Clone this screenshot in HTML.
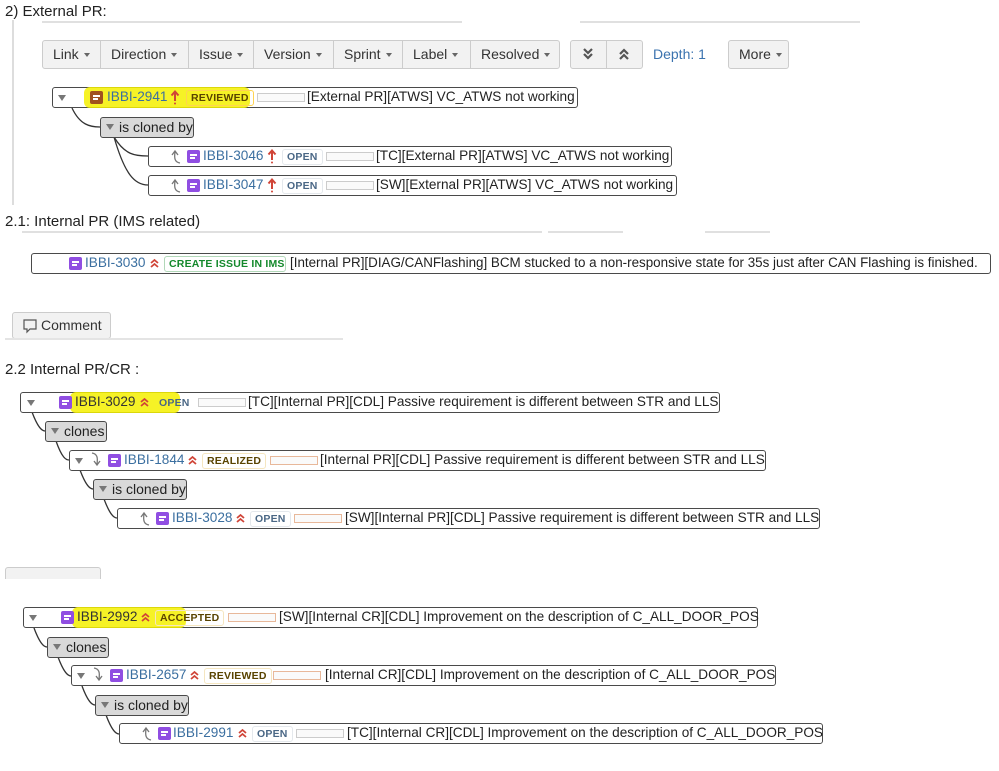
<!DOCTYPE html>
<html><head><meta charset="utf-8">
<style>
*{box-sizing:border-box;margin:0;padding:0}
body{width:999px;height:771px;background:#fff;position:relative;overflow:hidden;font-family:"Liberation Sans",Arial,sans-serif;color:#222}
.a{position:absolute;white-space:nowrap}
.h{font-size:15px;color:#222}
.box{position:absolute;border:1.5px solid #4a4a4a;border-radius:3px;background:#fff;height:21px}
.t{position:absolute;font-size:13.6px;line-height:18px;white-space:nowrap}
.key{color:#3b6fa0}
.st{position:absolute;font-size:10.5px;font-weight:bold;height:16px;line-height:15px;border:1px solid #e4e8ec;border-radius:3px;padding:0 4px;color:#4a6785;letter-spacing:.2px;white-space:nowrap}
.bar{position:absolute;height:9px;border:1px solid #ccc;background:#fafafa}
.bar.o{border-color:#e8b89a}
.ic{position:absolute;width:13px;height:13px;border-radius:2px;background:#904ee2}
.ic:before,.ic:after{content:"";position:absolute;left:3px;height:1.5px;background:#fff}
.ic:before{top:4px;width:7px}.ic:after{top:7px;width:5px}
.pill{position:absolute;height:21px;border:1.5px solid #4a4a4a;border-radius:3px;background:#d9d9d9;font-size:14px;line-height:18px;padding-left:18px;white-space:nowrap}
.pill:before,.tri:before{content:"";position:absolute;border-left:4px solid transparent;border-right:4px solid transparent;border-top:6px solid #777}
.pill:before{left:5px;top:6px}
.tri{position:absolute;width:8px;height:6px}.tri:before{left:0;top:0}
.hl{position:absolute;background:#f4f000;border-radius:6px;opacity:.85}
.btn{position:absolute;top:40px;height:29px;border:1px solid #ccc;background:#f2f2f2;font-size:14px;line-height:27px;color:#333;padding:0 0 0 10px;white-space:nowrap}
.car{display:inline-block;width:0;height:0;border-left:3.5px solid transparent;border-right:3.5px solid transparent;border-top:4px solid #666;vertical-align:middle;margin-left:5px}
</style></head><body>
<svg width="0" height="0" style="position:absolute">
<defs>
<symbol id="up" viewBox="0 0 10 16"><path d="M5 12V3M1.5 6.5L5 2.5 8.5 6.5" fill="none" stroke="#d04437" stroke-width="2"/><circle cx="5" cy="14.5" r="1" fill="#d04437"/></symbol>
<symbol id="dc" viewBox="0 0 11 11"><path d="M2 5l3.5-3 3.5 3M2 9l3.5-3 3.5 3" fill="none" stroke="#d04437" stroke-width="1.8"/></symbol>
<symbol id="lu" viewBox="0 0 14 16"><path d="M11 15C6 14 5 11 6 4M3 7l3-4 3 4" fill="none" stroke="#777" stroke-width="1.3"/></symbol>
<symbol id="ld" viewBox="0 0 14 16"><path d="M3 1C8 2 9 5 8 12M5 9l3 4 3-4" fill="none" stroke="#777" stroke-width="1.3"/></symbol>
</defs></svg>

<div class="a h" style="left:5px;top:3px">2) External PR:</div>
<div class="a" style="left:12px;top:20px;width:2px;height:185px;background:#ddd"></div>
<div class="a" style="left:42px;top:21px;width:420px;height:2px;background:#e0e0e0"></div>
<div class="a" style="left:580px;top:21px;width:280px;height:2px;background:#e0e0e0"></div>

<div class="btn" style="left:42px;width:59px;border-radius:3px 0 0 3px">Link<span class="car"></span></div>
<div class="btn" style="left:100px;width:89px">Direction<span class="car"></span></div>
<div class="btn" style="left:188px;width:66px">Issue<span class="car"></span></div>
<div class="btn" style="left:253px;width:81px">Version<span class="car"></span></div>
<div class="btn" style="left:333px;width:70px">Sprint<span class="car"></span></div>
<div class="btn" style="left:402px;width:69px">Label<span class="car"></span></div>
<div class="btn" style="left:470px;width:90px;border-radius:0 3px 3px 0">Resolved<span class="car"></span></div>
<div class="btn" style="left:570px;width:37px;border-radius:3px 0 0 3px"><svg width="14" height="14" style="margin-top:6px" viewBox="0 0 14 14"><path d="M3 2l4 4 4-4M3 7l4 4 4-4" fill="none" stroke="#555" stroke-width="2.2"/></svg></div>
<div class="btn" style="left:606px;width:37px;border-radius:0 3px 3px 0"><svg width="14" height="14" style="margin-top:6px" viewBox="0 0 14 14"><path d="M3 7l4-4 4 4M3 12l4-4 4 4" fill="none" stroke="#555" stroke-width="2.2"/></svg></div>
<div class="a" style="left:653px;top:46px;font-size:14px;color:#3b73af">Depth: 1</div>
<div class="btn" style="left:728px;width:61px;border-radius:3px">More<span class="car"></span></div>

<svg class="a" style="left:0;top:0" width="999" height="771">
<g fill="none" stroke="#333" stroke-width="1.3">
<path d="M72 108 C80 125,90 127,100 127"/>
<path d="M114 137 C125 155,135 156,148 156"/>
<path d="M114 137 C125 175,135 185,148 185"/>
<path d="M32 412 C38 428,42 431,45 431"/>
<path d="M56 441 C62 458,66 460,69 460"/>
<path d="M80 470 C86 486,90 489,93 489"/>
<path d="M104 499 C110 515,114 518,117 518"/>
<path d="M34 628 C40 644,44 647,47 647"/>
<path d="M58 657 C64 673,68 676,71 676"/>
<path d="M82 686 C88 702,92 705,95 705"/>
<path d="M106 715 C112 731,116 734,119 734"/>
</g></svg>

<!-- Row 1 -->
<div class="box" style="left:52px;top:87px;width:526px"></div>
<div class="hl" style="left:84px;top:87px;width:166px;height:21px"></div>
<div class="tri" style="left:58px;top:95px"></div>
<div class="ic" style="left:90px;top:91px;background:#a0521e"></div>
<div class="t key" style="left:107px;top:88px">IBBI-2941</div>
<svg class="a" style="left:170px;top:89px" width="10" height="16"><use href="#up"/></svg>
<div class="st" style="left:186px;top:90px;color:#594300;border-color:#ffd351">REVIEWED</div>
<div class="bar" style="left:257px;top:93px;width:48px"></div>
<div class="t" style="left:307px;top:88px">[External PR][ATWS] VC_ATWS not working</div>

<div class="pill" style="left:100px;top:117px;width:94px">is cloned by</div>

<div class="box" style="left:148px;top:146px;width:524px"></div>
<svg class="a" style="left:169px;top:148px" width="14" height="16"><use href="#lu"/></svg>
<div class="ic" style="left:187px;top:150px"></div>
<div class="t key" style="left:203px;top:147px">IBBI-3046</div>
<svg class="a" style="left:267px;top:148px" width="10" height="16"><use href="#up"/></svg>
<div class="st" style="left:282px;top:149px">OPEN</div>
<div class="bar" style="left:326px;top:152px;width:48px"></div>
<div class="t" style="left:376px;top:147px">[TC][External PR][ATWS] VC_ATWS not working</div>

<div class="box" style="left:148px;top:175px;width:529px"></div>
<svg class="a" style="left:169px;top:177px" width="14" height="16"><use href="#lu"/></svg>
<div class="ic" style="left:187px;top:179px"></div>
<div class="t key" style="left:203px;top:176px">IBBI-3047</div>
<svg class="a" style="left:267px;top:177px" width="10" height="16"><use href="#up"/></svg>
<div class="st" style="left:282px;top:178px">OPEN</div>
<div class="bar" style="left:326px;top:181px;width:48px"></div>
<div class="t" style="left:376px;top:176px">[SW][External PR][ATWS] VC_ATWS not working</div>

<!-- 2.1 -->
<div class="a h" style="left:5px;top:213px">2.1: Internal PR (IMS related)</div>
<div class="a" style="left:22px;top:231px;width:520px;height:2px;background:#e0e0e0"></div>
<div class="a" style="left:548px;top:231px;width:75px;height:2px;background:#e0e0e0"></div>
<div class="a" style="left:705px;top:231px;width:65px;height:2px;background:#e0e0e0"></div>
<div class="box" style="left:31px;top:253px;width:960px"></div>
<div class="ic" style="left:69px;top:257px"></div>
<div class="t key" style="left:85px;top:254px">IBBI-3030</div>
<svg class="a" style="left:149px;top:258px" width="11" height="11"><use href="#dc"/></svg>
<div class="st" style="left:164px;top:256px;color:#14892c;border-color:#b2d8b9;width:122px">CREATE ISSUE IN IMS</div>
<div class="t" style="left:290px;top:254px;font-size:13.4px">[Internal PR][DIAG/CANFlashing] BCM stucked to a non-responsive state for 35s just after CAN Flashing is finished.</div>

<div class="a" style="left:12px;top:312px;width:99px;height:27px;border:1px solid #ccc;border-radius:3px;background:#f2f2f2;font-size:14px;line-height:25px;color:#333;padding-left:28px">Comment</div>
<svg class="a" style="left:22px;top:318px" width="16" height="16" viewBox="0 0 16 16"><path d="M2 2h12v9H8l-3 3v-3H2z" fill="none" stroke="#555" stroke-width="1.2"/></svg>
<div class="a" style="left:5px;top:338px;width:338px;height:2px;background:#e4e4e4"></div>

<!-- 2.2 -->
<div class="a h" style="left:5px;top:361px">2.2 Internal PR/CR :</div>

<div class="box" style="left:20px;top:392px;width:700px"></div>
<div class="hl" style="left:70px;top:392px;width:110px;height:21px"></div>
<div class="tri" style="left:27px;top:400px"></div>
<div class="ic" style="left:59px;top:396px"></div>
<div class="t key" style="left:75px;top:393px;color:#333">IBBI-3029</div>
<svg class="a" style="left:139px;top:397px" width="11" height="11"><use href="#dc"/></svg>
<div class="st" style="left:154px;top:395px;border-color:transparent">OPEN</div>
<div class="bar" style="left:198px;top:398px;width:48px"></div>
<div class="t" style="left:248px;top:393px">[TC][Internal PR][CDL] Passive requirement is different between STR and LLS</div>

<div class="pill" style="left:45px;top:421px;width:62px">clones</div>

<div class="box" style="left:69px;top:450px;width:697px"></div>
<div class="tri" style="left:75px;top:458px"></div>
<svg class="a" style="left:89px;top:452px" width="14" height="16"><use href="#ld"/></svg>
<div class="ic" style="left:108px;top:454px"></div>
<div class="t key" style="left:124px;top:451px">IBBI-1844</div>
<svg class="a" style="left:187px;top:455px" width="11" height="11"><use href="#dc"/></svg>
<div class="st" style="left:202px;top:453px;color:#594300;border-color:#f5e6c0">REALIZED</div>
<div class="bar o" style="left:270px;top:456px;width:48px"></div>
<div class="t" style="left:320px;top:451px">[Internal PR][CDL] Passive requirement is different between STR and LLS</div>

<div class="pill" style="left:93px;top:479px;width:94px">is cloned by</div>

<div class="box" style="left:117px;top:508px;width:703px"></div>
<svg class="a" style="left:138px;top:510px" width="14" height="16"><use href="#lu"/></svg>
<div class="ic" style="left:156px;top:512px"></div>
<div class="t key" style="left:172px;top:509px">IBBI-3028</div>
<svg class="a" style="left:235px;top:513px" width="11" height="11"><use href="#dc"/></svg>
<div class="st" style="left:250px;top:511px">OPEN</div>
<div class="bar o" style="left:294px;top:514px;width:48px"></div>
<div class="t" style="left:345px;top:509px">[SW][Internal PR][CDL] Passive requirement is different between STR and LLS</div>

<div class="a" style="left:5px;top:567px;width:96px;height:12px;border:1px solid #ccc;border-bottom:none;border-radius:3px 3px 0 0;background:#f2f2f2"></div>

<div class="box" style="left:23px;top:607px;width:735px"></div>
<div class="hl" style="left:72px;top:607px;width:114px;height:21px"></div>
<div class="tri" style="left:29px;top:615px"></div>
<div class="ic" style="left:61px;top:611px"></div>
<div class="t key" style="left:77px;top:608px;color:#333">IBBI-2992</div>
<svg class="a" style="left:140px;top:612px" width="11" height="11"><use href="#dc"/></svg>
<div class="st" style="left:155px;top:610px;color:#594300;border-color:#f5e6c0">ACCEPTED</div>
<div class="bar o" style="left:228px;top:613px;width:48px"></div>
<div class="t" style="left:279px;top:608px">[SW][Internal CR][CDL] Improvement on the description of C_ALL_DOOR_POS</div>

<div class="pill" style="left:47px;top:637px;width:62px">clones</div>

<div class="box" style="left:71px;top:665px;width:705px"></div>
<div class="tri" style="left:77px;top:673px"></div>
<svg class="a" style="left:91px;top:667px" width="14" height="16"><use href="#ld"/></svg>
<div class="ic" style="left:110px;top:669px"></div>
<div class="t key" style="left:126px;top:666px">IBBI-2657</div>
<svg class="a" style="left:189px;top:670px" width="11" height="11"><use href="#dc"/></svg>
<div class="st" style="left:204px;top:668px;color:#594300;border-color:#f5e6c0">REVIEWED</div>
<div class="bar o" style="left:273px;top:671px;width:48px"></div>
<div class="t" style="left:325px;top:666px">[Internal CR][CDL] Improvement on the description of C_ALL_DOOR_POS</div>

<div class="pill" style="left:95px;top:695px;width:94px">is cloned by</div>

<div class="box" style="left:119px;top:723px;width:704px"></div>
<svg class="a" style="left:140px;top:725px" width="14" height="16"><use href="#lu"/></svg>
<div class="ic" style="left:158px;top:727px"></div>
<div class="t key" style="left:173px;top:724px">IBBI-2991</div>
<svg class="a" style="left:237px;top:728px" width="11" height="11"><use href="#dc"/></svg>
<div class="st" style="left:252px;top:726px">OPEN</div>
<div class="bar" style="left:296px;top:729px;width:48px"></div>
<div class="t" style="left:347px;top:724px">[TC][Internal CR][CDL] Improvement on the description of C_ALL_DOOR_POS</div>

</body></html>
